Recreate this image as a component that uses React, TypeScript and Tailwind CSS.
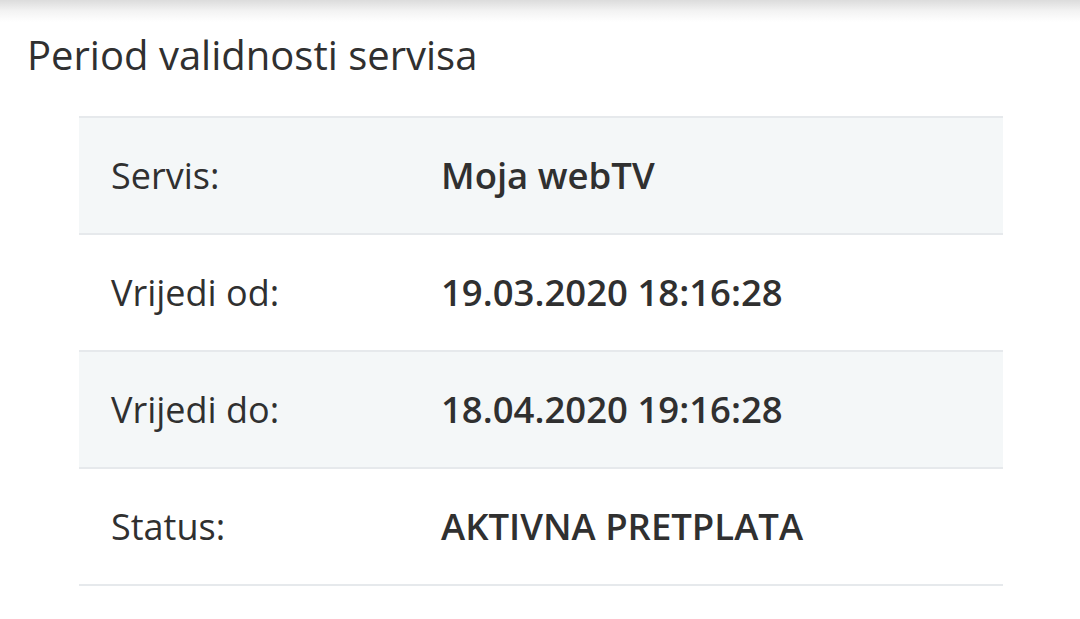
import React from "react";

const rows = [
  { label: "Servis:", value: "Moja webTV" },
  { label: "Vrijedi od:", value: "19.03.2020 18:16:28" },
  { label: "Vrijedi do:", value: "18.04.2020 19:16:28" },
  { label: "Status:", value: "AKTIVNA PRETPLATA" },
];

export default function App() {
  return (
    <div className="min-h-[619px] bg-white text-[#303030]" style={{ fontFamily: '"Open Sans", "Noto Sans", sans-serif' }}>
      <div className="h-[22px] bg-gradient-to-b from-[#dcdcdc] via-[#f3f3f3] to-white" />
      <h1 className="pl-[27px] pt-[5px] text-[40px] leading-[56px] font-normal">Period validnosti servisa</h1>
      <div className="mx-[79px] mt-[33px] w-[924px] border-t-2 border-[#e6e9ec]">
        {rows.map((r, i) => (
          <div
            key={r.label}
            className={
              "flex h-[117px] items-center border-b-2 border-[#e6e9ec] " +
              (i % 2 === 0 ? "bg-[#f4f7f8]" : "bg-white")
            }
          >
            <div className="w-[362px] pl-[32px] text-[36px]">{r.label}</div>
            <div className="text-[36.5px] font-semibold">{r.value}</div>
          </div>
        ))}
      </div>
    </div>
  );
}
